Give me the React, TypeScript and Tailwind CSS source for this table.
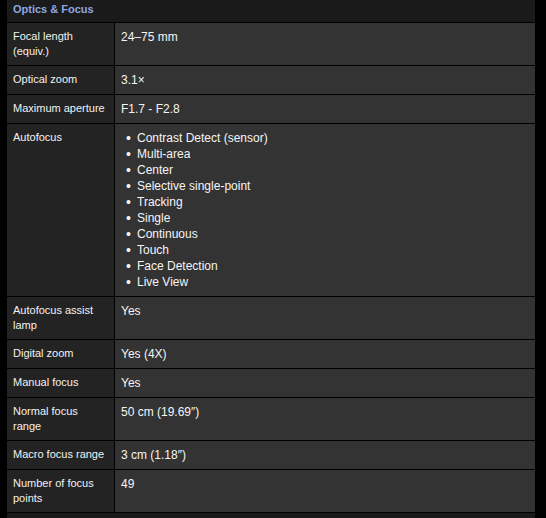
import React from 'react';

type Spec = { label: string; value: string | string[] };

const specs: Spec[] = [
  { label: 'Focal length (equiv.)', value: '24–75 mm' },
  { label: 'Optical zoom', value: '3.1×' },
  { label: 'Maximum aperture', value: 'F1.7 - F2.8' },
  {
    label: 'Autofocus',
    value: [
      'Contrast Detect (sensor)',
      'Multi-area',
      'Center',
      'Selective single-point',
      'Tracking',
      'Single',
      'Continuous',
      'Touch',
      'Face Detection',
      'Live View',
    ],
  },
  { label: 'Autofocus assist lamp', value: 'Yes' },
  { label: 'Digital zoom', value: 'Yes (4X)' },
  { label: 'Manual focus', value: 'Yes' },
  { label: 'Normal focus range', value: '50 cm (19.69″)' },
  { label: 'Macro focus range', value: '3 cm (1.18″)' },
  { label: 'Number of focus points', value: '49' },
];

export default function App() {
  return (
    <div
      className="w-[546px] h-[518px] bg-black pl-[7px] pr-[11px] overflow-hidden"
      style={{ fontFamily: '"Liberation Sans", Arial, sans-serif' }}
    >
      <div className="bg-[#1a1a1a] h-full">
        {/* Section header */}
        <div className="h-[23px] border-b border-black px-[6px] pt-[3px] text-[11px] leading-[13px] font-bold text-[#8ea7e0]">
          Optics &amp; Focus
        </div>

        {specs.map((spec) => (
          <div key={spec.label} className="flex border-b border-black">
            <div className="w-[108px] shrink-0 bg-[#232323] border-r border-black px-[6px] pt-[6px] pb-[6px] text-[11px] leading-[15px] text-[#f2f2f2]">
              {spec.label}
            </div>
            <div className="flex-1 bg-[#333333] px-[6px] pt-[6px] pb-[6px] text-[12px] leading-[16px] text-[#f5f5f5]">
              {Array.isArray(spec.value) ? (
                <ul>
                  {spec.value.map((item) => (
                    <li key={item} className="flex items-center">
                      <span className="w-[16px] pl-[5px] text-[14px] leading-[16px]">•</span>
                      <span>{item}</span>
                    </li>
                  ))}
                </ul>
              ) : (
                spec.value
              )}
            </div>
          </div>
        ))}
      </div>
    </div>
  );
}
